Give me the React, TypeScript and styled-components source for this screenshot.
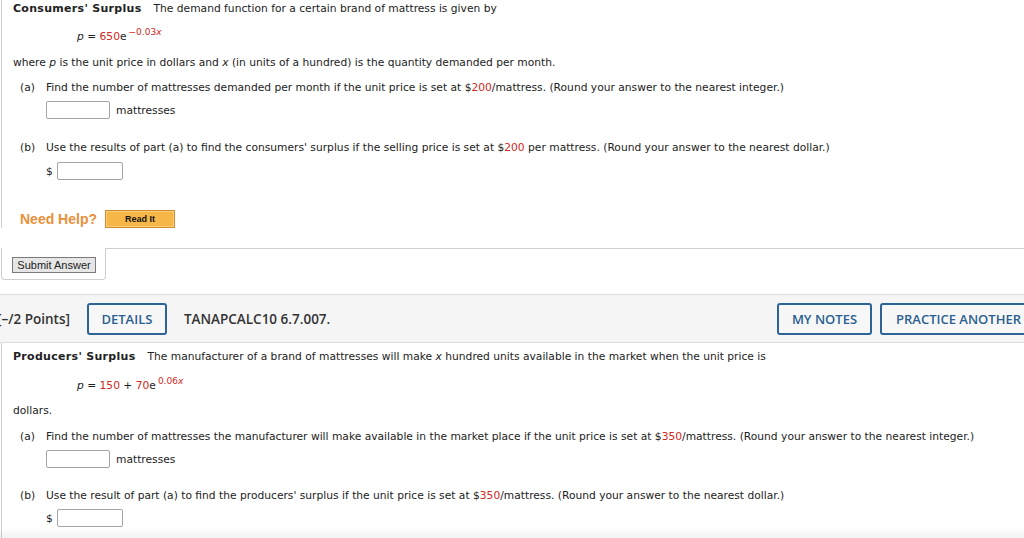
import React from "react";
import styled, { createGlobalStyle } from "styled-components";

const GlobalStyle = createGlobalStyle`
  html, body { margin: 0; padding: 0; background: #ffffff; overflow: hidden; }
  body {
    font-family: "DejaVu Sans", Verdana, sans-serif;
    font-size: 10.7px;
    color: #222;
  }
  body::after {
    content: "";
    position: fixed;
    left: 0; right: 0; bottom: 0;
    height: 10px;
    background: linear-gradient(to bottom, rgba(0,0,0,0), rgba(0,0,0,0.05));
    pointer-events: none;
  }
`;

const Page = styled.div`
  width: 1024px;
  overflow: hidden;
`;

const QuestionBody = styled.div<{ $top?: number }>`
  margin-left: 1px;
  border-left: 1px solid #cfcfcf;
  padding-left: 11px;
  padding-top: ${(p) => p.$top ?? 0}px;
`;

const Line = styled.div<{ $mt?: number; $indent?: number }>`
  line-height: 18px;
  height: 18px;
  margin-top: ${(p) => p.$mt ?? 0}px;
  padding-left: ${(p) => p.$indent ?? 0}px;
  white-space: nowrap;
`;

const Title = styled.b`
  font-weight: bold;
  font-size: 11px;
  letter-spacing: 0.3px;
  margin-right: 12px;
`;

const Var = styled.i`
  font-style: italic;
`;

const Red = styled.span`
  color: #d0281c;
`;

const Sup = styled.sup`
  font-size: 9px;
  color: #d0281c;
  vertical-align: 5px;
  line-height: 0;
  margin-left: 2px;
`;

const PartRow = styled.div<{ $mt?: number }>`
  display: flex;
  line-height: 18px;
  height: 18px;
  margin-top: ${(p) => p.$mt ?? 0}px;
  padding-left: 7px;
  white-space: nowrap;
`;

const PartLabel = styled.span`
  width: 26px;
  flex: none;
`;

const AnswerRow = styled.div<{ $mt?: number }>`
  display: flex;
  align-items: center;
  height: 18px;
  margin-top: ${(p) => p.$mt ?? 0}px;
  padding-left: 33px;
  gap: 6px;
`;

const Dollar = styled.span`
  margin-right: -2px;
`;

const AnswerInput = styled.div<{ $w?: number }>`
  box-sizing: border-box;
  width: ${(p) => p.$w ?? 64}px;
  height: 18px;
  border: 1px solid #a4a4a4;
  border-radius: 2px;
  background: #fff;
`;

const HelpRow = styled.div`
  display: flex;
  align-items: center;
  height: 19px;
  margin-top: 29px;
  padding-left: 7px;
  gap: 8px;
`;

const HelpText = styled.span`
  font-family: "Liberation Sans", Arial, sans-serif;
  font-weight: bold;
  font-size: 14px;
  color: #e8913a;
`;

const ReadIt = styled.div`
  box-sizing: border-box;
  width: 70px;
  height: 18px;
  background: #f6b648;
  border: 1px solid #d08a35;
  box-shadow: inset 0 0 0 1px #fbcf72;
  font-family: "Liberation Sans", Arial, sans-serif;
  font-weight: bold;
  font-size: 9px;
  color: #111;
  display: flex;
  align-items: center;
  justify-content: center;
`;

const Footer = styled.div`
  display: flex;
  margin-top: 20px;
  margin-left: 1px;
`;

const SubmitTab = styled.div`
  width: 105px;
  box-sizing: border-box;
  border-left: 1px solid #cfcfcf;
  border-right: 1px solid #cfcfcf;
  border-bottom: 1px solid #cfcfcf;
  border-radius: 0 0 4px 4px;
  padding: 9px 0 6px 10px;
`;

const FooterFill = styled.div`
  flex: 1;
  border-top: 1px solid #cfcfcf;
`;

const SubmitButton = styled.div`
  box-sizing: border-box;
  width: 84px;
  height: 16px;
  background: #e6e6e6;
  border: 1px solid #7a7a7a;
  font-family: "Liberation Sans", Arial, sans-serif;
  font-size: 11px;
  color: #222;
  display: flex;
  align-items: center;
  justify-content: center;
`;

const HeaderBar = styled.div`
  margin-top: 14px;
  height: 47px;
  background: #f5f5f5;
  border-top: 1px solid #dddddd;
  border-bottom: 1px solid #dddddd;
  display: flex;
  align-items: center;
  justify-content: space-between;
  font-family: "Open Sans", sans-serif;
  font-weight: 600;
  font-size: 13.5px;
  color: #333;
`;

const HeaderGroup = styled.div<{ $edge?: "left" | "right" }>`
  display: flex;
  align-items: center;
  gap: ${(p) => (p.$edge === "left" ? 17 : 8)}px;
  margin-left: ${(p) => (p.$edge === "left" ? -3 : 0)}px;
  margin-right: ${(p) => (p.$edge === "right" ? -13 : 0)}px;
  white-space: nowrap;
`;

const OutlineButton = styled.div<{ $w: number }>`
  box-sizing: border-box;
  width: ${(p) => p.$w}px;
  height: 32px;
  border: 2px solid #2e6396;
  border-radius: 3px;
  color: #2b5f91;
  font-family: "Open Sans", sans-serif;
  font-weight: 600;
  font-size: 13px;
  display: flex;
  align-items: center;
  justify-content: center;
  background: #f7f7f7;
`;

export default function App() {
  return (
    <Page>
      <GlobalStyle />
      <QuestionBody>
        <Line>
          <Title>Consumers' Surplus</Title>
          The demand function for a certain brand of mattress is given by
        </Line>
        <Line $mt={10} $indent={64}>
          <Var>p</Var> = <Red>650</Red>e<Sup>−0.03<Var>x</Var></Sup>
        </Line>
        <Line $mt={8}>
          where <Var>p</Var> is the unit price in dollars and <Var>x</Var> (in units of a hundred) is the quantity demanded per month.
        </Line>
        <PartRow $mt={7}>
          <PartLabel>(a)</PartLabel>
          <span>
            Find the number of mattresses demanded per month if the unit price is set at $<Red>200</Red>/mattress. (Round your answer to the nearest integer.)
          </span>
        </PartRow>
        <AnswerRow $mt={4}>
          <AnswerInput />
          <span>mattresses</span>
        </AnswerRow>
        <PartRow $mt={20}>
          <PartLabel>(b)</PartLabel>
          <span>
            Use the results of part (a) to find the consumers' surplus if the selling price is set at $<Red>200</Red> per mattress. (Round your answer to the nearest dollar.)
          </span>
        </PartRow>
        <AnswerRow $mt={5}>
          <Dollar>$</Dollar>
          <AnswerInput $w={66} />
        </AnswerRow>
        <HelpRow>
          <HelpText>Need Help?</HelpText>
          <ReadIt>Read It</ReadIt>
        </HelpRow>
      </QuestionBody>
      <Footer>
        <SubmitTab>
          <SubmitButton>Submit Answer</SubmitButton>
        </SubmitTab>
        <FooterFill />
      </Footer>

      <HeaderBar>
        <HeaderGroup $edge="left">
          <span>[–/2 Points]</span>
          <OutlineButton $w={80}>DETAILS</OutlineButton>
          <span>TANAPCALC10 6.7.007.</span>
        </HeaderGroup>
        <HeaderGroup $edge="right">
          <OutlineButton $w={95}>MY NOTES</OutlineButton>
          <OutlineButton $w={157}>PRACTICE ANOTHER</OutlineButton>
        </HeaderGroup>
      </HeaderBar>

      <QuestionBody $top={5}>
        <Line>
          <Title>Producers' Surplus</Title>
          The manufacturer of a brand of mattresses will make <Var>x</Var> hundred units available in the market when the unit price is
        </Line>
        <Line $mt={11} $indent={64}>
          <Var>p</Var> = <Red>150</Red> + <Red>70</Red>e<Sup>0.06<Var>x</Var></Sup>
        </Line>
        <Line $mt={7}>dollars.</Line>
        <PartRow $mt={8}>
          <PartLabel>(a)</PartLabel>
          <span>
            Find the number of mattresses the manufacturer will make available in the market place if the unit price is set at $<Red>350</Red>/mattress. (Round your answer to the nearest integer.)
          </span>
        </PartRow>
        <AnswerRow $mt={4}>
          <AnswerInput />
          <span>mattresses</span>
        </AnswerRow>
        <PartRow $mt={19}>
          <PartLabel>(b)</PartLabel>
          <span>
            Use the result of part (a) to find the producers' surplus if the unit price is set at $<Red>350</Red>/mattress. (Round your answer to the nearest dollar.)
          </span>
        </PartRow>
        <AnswerRow $mt={4}>
          <Dollar>$</Dollar>
          <AnswerInput $w={66} />
        </AnswerRow>
        <Line $mt={20} />
      </QuestionBody>
    </Page>
  );
}
